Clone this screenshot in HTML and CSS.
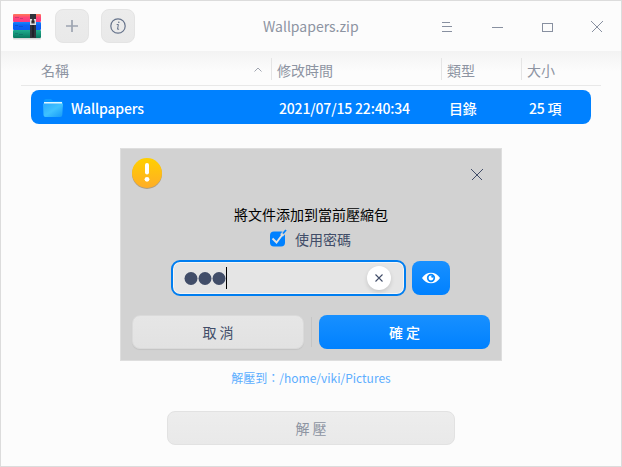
FILE: index.html
```html
<!DOCTYPE html>
<html lang="zh-Hant">
<head>
<meta charset="utf-8">
<title>Wallpapers.zip</title>
<link rel="stylesheet" href="styles.css">
</head>
<body>
<div class="window">
  <header class="titlebar">
    <svg class="logo" width="30" height="28" viewBox="0 0 30 28">
      <defs>
        <linearGradient id="red" x2="0" y2="1"><stop stop-color="#ff7a58"/><stop offset=".45" stop-color="#ff4478"/><stop offset="1" stop-color="#fb3b80"/></linearGradient>
        <linearGradient id="blue" x2="0" y2="1"><stop stop-color="#1688f8"/><stop offset=".4" stop-color="#0a62f5"/><stop offset="1" stop-color="#0a5cf0"/></linearGradient>
        <linearGradient id="green" x2="0" y2="1"><stop stop-color="#20ad8f"/><stop offset="1" stop-color="#08785f"/></linearGradient>
      </defs>
      <rect x="1" y="26" width="28" height="1.4" rx=".7" fill="#000" opacity=".15"/>
      <rect x="1" y="2" width="28" height="8" rx="1" fill="url(#red)"/>
      <rect x="1" y="10" width="28" height="8" rx="1" fill="url(#blue)"/>
      <rect x="1" y="18" width="28" height="8" rx="1" fill="url(#green)"/>
      <path d="M3 5.500h4M8 6.500h3M3 13.500h3M7 14.500h4M3 21.500h3M7 22.500h4" stroke="#102050" stroke-opacity=".22" fill="none"/>
      <rect x="18" y="2" width="6" height="24" fill="#30333b"/>
      <path d="M21 13v12" stroke="#1f2229" stroke-width="2"/>
      <path d="M18.700 7.700h4.600v4.600h-4.600z" fill="#333" stroke="#ddd" stroke-width="1.400"/>
      <path d="M21 7v3" stroke="#222" stroke-width="1.600"/>
    </svg>
    <button class="tool add"><svg width="14" height="14" viewBox="0 0 14 14"><path d="M7 1v12M1 7h12" stroke="#9da4b1" stroke-width="1.700"/></svg></button>
    <button class="tool info"><svg width="16" height="16" viewBox="0 0 16 16" fill="none" stroke="#66738b"><circle cx="8" cy="8" r="7.200" stroke-width="1.200"/><path d="M6.700 6.500h1.700l-.9 4.700h1.600" stroke-width="1"/><circle cx="8.800" cy="4.300" r=".8" fill="#66738b" stroke="none"/></svg></button>
    <h1 class="title">Wallpapers.zip</h1>
    <nav class="controls">
      <svg width="12" height="12" viewBox="0 0 12 12"><path d="M1 1.500h8M1 5.500h10M1 10.500h10"/></svg>
      <svg width="12" height="12" viewBox="0 0 12 12"><path d="M.5 6.500h11"/></svg>
      <svg width="12" height="12" viewBox="0 0 12 12"><path d="M1.500 2.500h10v8h-10z"/></svg>
      <svg width="12" height="12" viewBox="0 0 12 12"><path d="M.5.5l11 11M11.500.5l-11 11"/></svg>
    </nav>
  </header>
  <main class="content">
    <div class="columns">
      <div class="col name">名稱<svg width="8" height="6" viewBox="0 0 8 6"><path d="M.5 4.500L4 1l3.500 3.500" fill="none" stroke="#a0a5b0"/></svg></div>
      <div class="col">修改時間</div>
      <div class="col">類型</div>
      <div class="col">大小</div>
    </div>
    <div class="row">
      <div class="cell first">
        <svg width="22" height="20" viewBox="0 0 22 20">
          <defs><linearGradient id="folder" x2="1" y2="1"><stop stop-color="#2aa9ff"/><stop offset=".5" stop-color="#3fc2ff"/><stop offset="1" stop-color="#1499f7"/></linearGradient></defs>
          <path d="M2 3q0-2 2-2h5l2 2h8q2 0 2 2v4H1z" fill="#0897ff"/>
          <path d="M2 4h18v4H2z" fill="#e1f6ff"/>
          <path d="M1 5.500h20l-.7 11.500q-.1 2-2 2H3.500q-1.900 0-2-2z" fill="url(#folder)"/>
        </svg>Wallpapers</div>
      <div class="cell">2021/07/15 22:40:34</div>
      <div class="cell">目錄</div>
      <div class="cell">25 項</div>
    </div>
  </main>
  <footer class="footer">
    <div class="path">解壓到：/home/viki/Pictures</div>
    <button class="extract">解 壓</button>
  </footer>
  <section class="dialog">
    <div class="dialog-head">
      <svg width="32" height="34" viewBox="0 0 32 34">
        <defs><linearGradient id="warn" x2="0" y2="1"><stop stop-color="#ffd000"/><stop offset="1" stop-color="#ffad27"/></linearGradient></defs>
        <circle cx="16" cy="17" r="15" fill="#967b4d" opacity=".6"/>
        <circle cx="16" cy="16" r="15" fill="url(#warn)"/>
        <path d="M16 8v7.500" stroke="#fff" stroke-width="4" stroke-linecap="round"/><circle cx="16" cy="22.300" r="2.400" fill="#fff"/>
      </svg>
      <svg class="close" width="12" height="12" viewBox="0 0 12 12"><path d="M.5.5l11 11M11.500.5l-11 11" stroke="#414d68"/></svg>
    </div>
    <p class="message">將文件添加到當前壓縮包</p>
    <label class="use-password">
      <svg width="18" height="18" viewBox="0 0 18 18"><rect x="1" y="2.500" width="15" height="15" rx="4" fill="#0081ff"/><path d="M12.500 6.500L16 2.500" fill="none" stroke="#d2d2d2" stroke-width="3.600"/><path d="M3.500 9.500l4 4L13.500 5.500" fill="none" stroke="#e2e2e2" stroke-width="1.900"/><path d="M14 4.500L17 1" stroke="#0081ff" stroke-width="1.800"/></svg>
      <span>使用密碼</span>
    </label>
    <div class="password-line">
      <div class="field">
        <svg class="dots" width="42" height="14" viewBox="0 0 42 14" fill="#414d68"><circle cx="7" cy="7.500" r="6.500"/><circle cx="21" cy="7.500" r="6.500"/><circle cx="35" cy="7.500" r="6.500"/></svg>
        <span class="caret"></span>
        <span class="clear"><svg width="8" height="8" viewBox="0 0 8 8"><path d="M.5.5l7 7M7.500.5l-7 7" stroke="#414d68" stroke-width="1.100"/></svg></span>
      </div>
      <button class="reveal"><svg width="18" height="12" viewBox="0 0 18 12"><path d="M0 6Q3.500.7 9 .7T18 6Q14.500 11.300 9 11.300T0 6z" fill="#fff"/><circle cx="9" cy="6" r="3.300" fill="#fff" stroke="#098aff" stroke-width="1.700"/><circle cx="10.300" cy="4.700" r="1.100" fill="#098aff"/></svg></button>
    </div>
    <div class="actions">
      <button class="cancel">取 消</button>
      <span class="divider"></span>
      <button class="confirm">確 定</button>
    </div>
  </section>
</div>
</body>
</html>
```
FILE: styles.css
```css
* { box-sizing: border-box; }
body {
  margin: 0;
  font: 14px/20px "Noto Sans CJK TC", sans-serif;
  color: #414d68;
}
button { border: 0; padding: 0; font: inherit; color: inherit; }
svg { display: block; flex: none; }
.window {
  position: relative;
  display: flex;
  flex-direction: column;
  width: 622px;
  height: 467px;
  border: 1px solid #dcdcdc;
  background: #fcfcfc;
  overflow: hidden;
}
.titlebar {
  display: flex;
  align-items: center;
  height: 50px;
  padding-left: 11px;
}
.tool {
  display: grid;
  place-items: center;
  width: 34px;
  height: 34px;
  border: 1px solid #e4e4e4;
  border-radius: 8px;
  background: linear-gradient(#ececec, #e9e9e9);
}
.add { margin-left: 13px; }
.info { margin-left: 12px; }
.title {
  width: 96px;
  margin: 0 0 0 128px;
  font-size: 14px;
  font-weight: 400;
  white-space: nowrap;
  color: #8d94a2;
}
.controls {
  display: flex;
  gap: 38px;
  margin-left: 82px;
  padding-top: 2px;
}
.controls path {
  fill: none;
  stroke: #8890a0;
  shape-rendering: crispEdges;
}
.content {
  background: linear-gradient(#f3f3f3, #fcfcfc 20px);
}
.columns {
  display: grid;
  grid-template-columns: 250px 170px 80px 80px;
  align-items: center;
  height: 35px;
  margin: 0 20px;
  border-bottom: 1px solid #e8e8e8;
  color: #8d94a2;
}
.col {
  height: 22px;
  margin-top: 2px;
  padding-left: 5px;
  border-left: 1px solid #e5e5e5;
  line-height: 24px;
}
.col.name {
  display: flex;
  align-items: center;
  justify-content: space-between;
  border: 0;
  padding: 2px 9px 0 20px;
}
.row {
  display: grid;
  grid-template-columns: 248px 170px 80px 62px;
  align-items: center;
  width: 560px;
  height: 34px;
  margin: 4px 30px 0;
  border-radius: 8px;
  background: #0081ff;
  color: #fff;
  font-weight: 500;
}
.cell { padding-top: 2px; white-space: nowrap; letter-spacing: -.17px; }
.first {
  display: flex;
  align-items: center;
  gap: 7px;
  padding-left: 11px;
}
.footer {
  display: flex;
  flex-direction: column;
  align-items: center;
  gap: 23px;
  margin-top: auto;
  padding-bottom: 21px;
}
.path {
  font-size: 12px;
  color: #5caeff;
}
.extract {
  width: 288px;
  height: 34px;
  border: 1px solid #e2e2e2;
  border-radius: 8px;
  background: linear-gradient(#ededed, #e9e9e9);
  color: #8d94a2;
}
.dialog {
  position: absolute;
  top: 147px;
  left: 119px;
  width: 382px;
  height: 213px;
  border: 1px solid #dedede;
  background: #d2d2d2;
}
.dialog-head {
  display: flex;
  justify-content: space-between;
  height: 55px;
  padding: 8px 18px 0 10px;
}
.close { margin-top: 12px; shape-rendering: crispEdges; }
.message {
  margin: 0;
  text-align: center;
  color: #000;
}
.use-password {
  display: flex;
  justify-content: center;
  gap: 8px;
  height: 25px;
  padding-top: 4px;
  padding-right: 2px;
  line-height: 22px;
}
.use-password svg { margin-top: 1px; }
.password-line {
  display: flex;
  align-items: center;
  gap: 6px;
  margin: 11px 0 0 50px;
}
.field {
  display: flex;
  align-items: center;
  width: 235px;
  height: 36px;
  border: 2px solid #007ef0;
  border-radius: 9px;
  background: #e5e5e5;
  box-shadow: inset 0 0 0 1px #f5f5f5;
  padding: 0 13px 0 11px;
}
.caret { width: 1px; height: 22px; background: #000; }
.clear {
  display: grid;
  place-items: center;
  width: 24px;
  height: 24px;
  margin-left: auto;
  border-radius: 50%;
  background: #fff;
  box-shadow: 0 2px 4px #0002;
}
.reveal {
  display: grid;
  place-items: center;
  width: 38px;
  height: 34px;
}
.reveal, .confirm {
  border-radius: 8px;
  background: linear-gradient(#1890ff, #0081ff);
  color: #fff;
}
.actions {
  display: flex;
  margin: 19px 0 0 11px;
}
.cancel {
  width: 172px;
  height: 34px;
  border: 1px solid #dadada;
  border-radius: 8px;
  background: linear-gradient(#e6e6e6, #e2e2e2);
  box-shadow: 0 1px 1px #0001;
}
.divider {
  width: 1px;
  height: 30px;
  margin: 2px 7px;
  background: #c5c5c5;
}
.confirm { width: 171px; height: 34px; font-weight: 500; }
```
